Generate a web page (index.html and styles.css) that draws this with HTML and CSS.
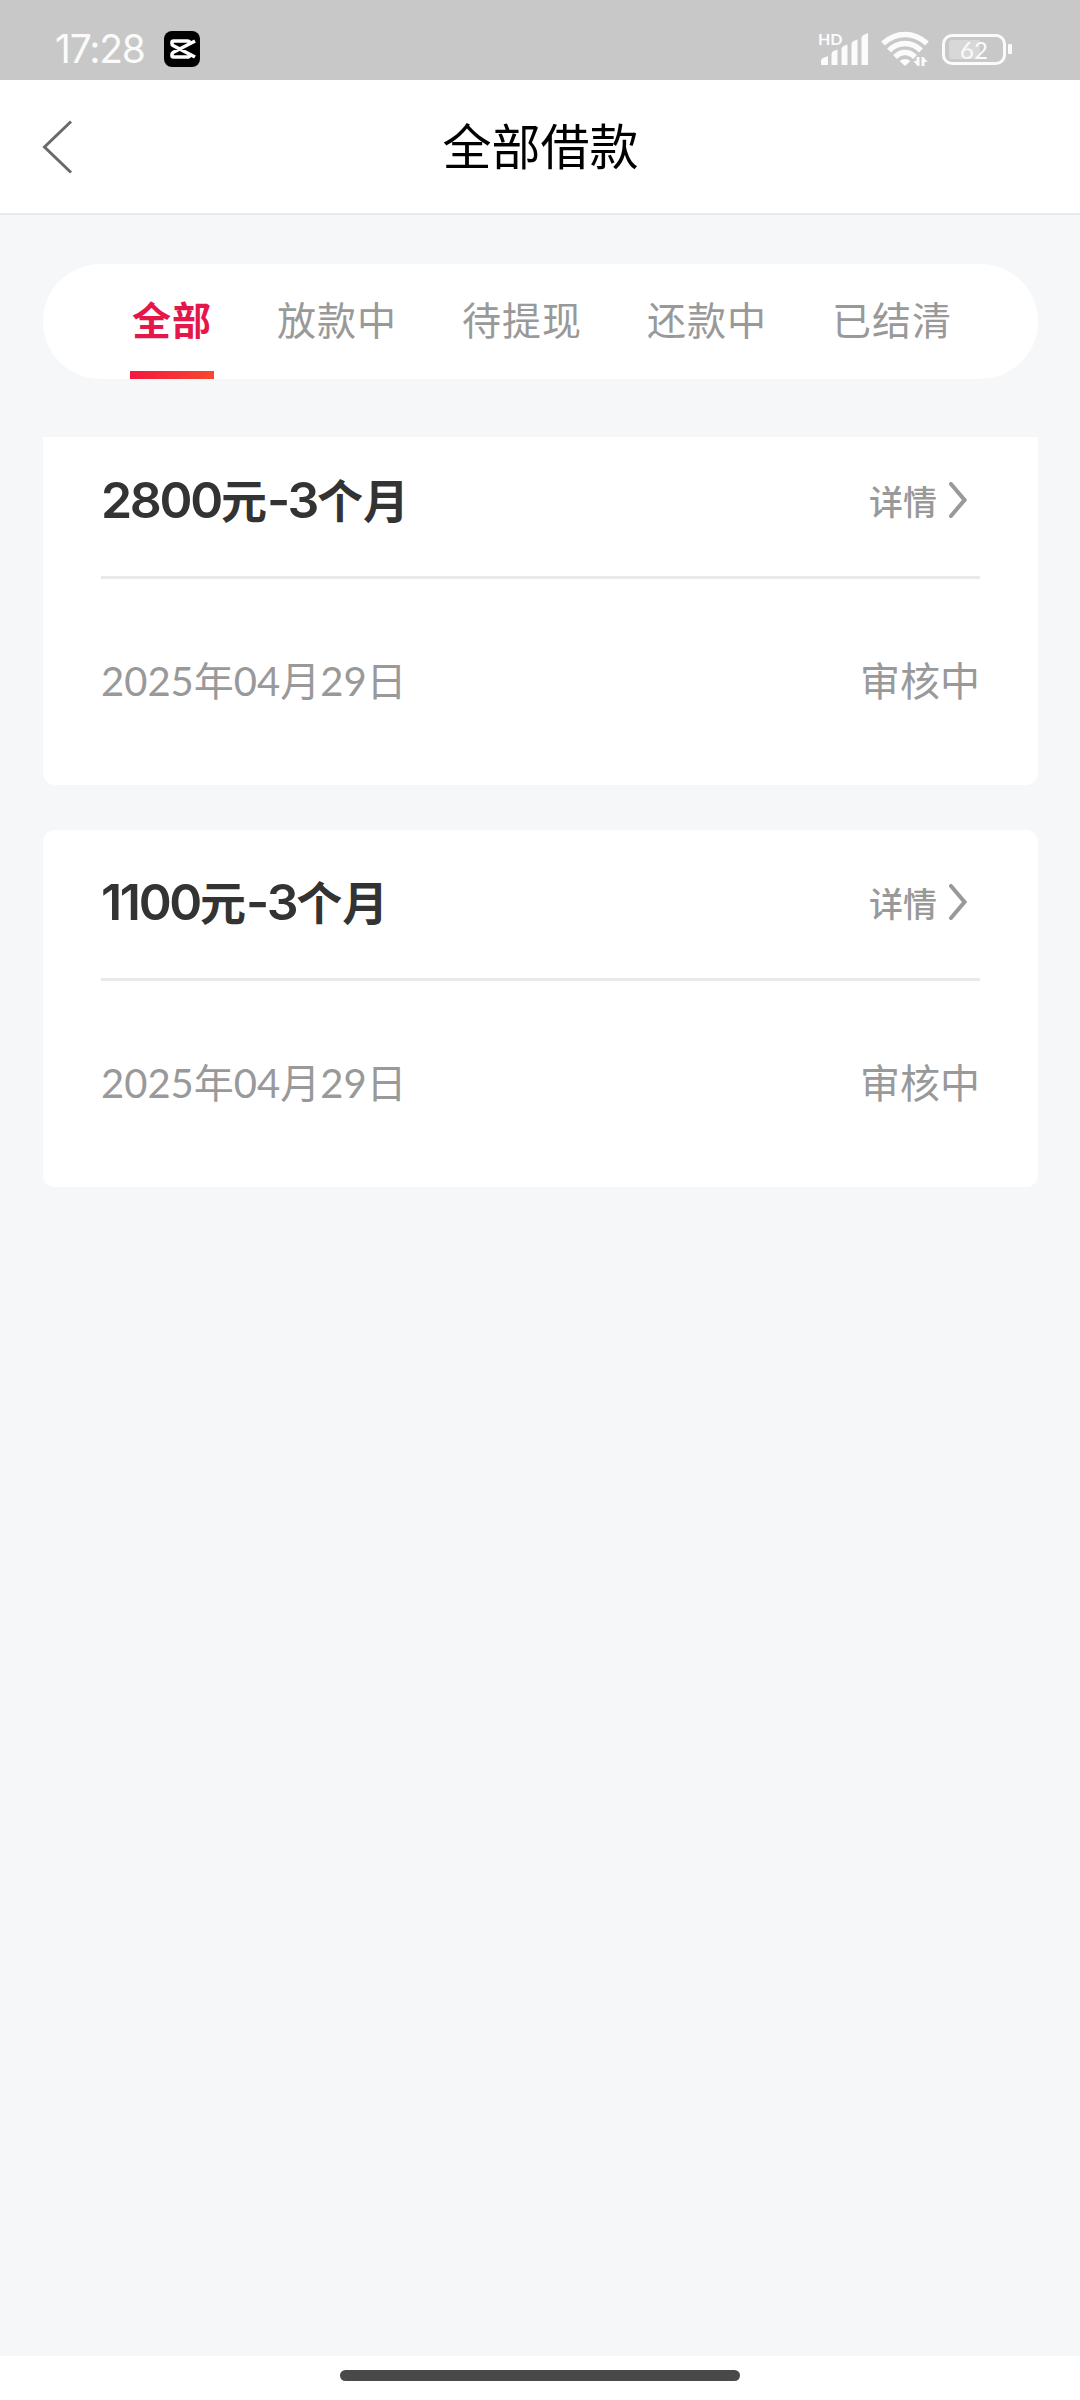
FILE: index.html
```html
<!DOCTYPE html>
<html lang="zh-CN">
<head>
    <meta charset="UTF-8">
    <meta name="viewport" content="width=device-width, initial-scale=1.0">
    <title>全部借款</title>
    <link rel="stylesheet" href="styles.css">
</head>
<body>
    <div class="status">
        <span class="time">17:28</span>
        <svg class="app" width="36" height="36" viewBox="0 0 36 36">
            <rect width="36" height="36" rx="8" fill="#000"/>
            <path d="M31 10L9 21.500Q8 22 8 23.500v1q0 1.500 1.500 1.500H23q2.500 0 3-2M31 26L9 14.500Q8 14 8 12.500v-1Q8 10 9.500 10H23q2.500 0 3 2" fill="none" stroke="#fff" stroke-width="3.600"/>
        </svg>
        <div class="status-right">
            <div class="signal">
                <span class="hd">HD</span>
                <svg width="50" height="34" viewBox="0 0 50 34">
                    <g fill="#fbfbfb">
                        <path d="M2 33v-4q0-2 2-3l5-2v9zM12.500 33V22q0-2 2-3l4-1.500V33zM22.500 33V17q0-2 2-3l4-1.500V33zM32.500 33V12q0-2 2-3l4-1.500V33zM42.500 33V6q0-2 2-3l4.500-2v32z"/>
                    </g>
                </svg>
            </div>
            <svg class="wifi" width="48" height="36" viewBox="0 0 48 36">
                <g fill="none" stroke="#fbfbfb" stroke-width="5.500">
                    <path d="M2 12.500Q12 3.500 24 3.500T46 12.500"/>
                    <path d="M8 19.500Q15 12.500 24 12.500T40 19.500"/>
                    <path d="M14 26Q18.500 21.500 24 21.500T34 26"/>
                </g>
                <path d="M18.500 30Q24 26 29.500 30L24 35z" fill="#fbfbfb"/>
                <path d="M38.500 26v9h-2l-4-5h3v-4zM40.500 35v-9h2l4 5h-3v4z" fill="#fbfbfb"/>
            </svg>
            <div class="battery">
                <div class="battery-body"><span>62</span></div>
                <div class="battery-cap"></div>
            </div>
        </div>
    </div>
    <div class="nav">
        <svg class="back" width="32" height="56" viewBox="0 0 32 56">
            <path d="M29 2.500L2.500 28L29 53.500" fill="none" stroke="#6a6a6a" stroke-width="3"/>
        </svg>
        <div class="nav-title">全部借款</div>
    </div>
    <div class="main">
        <div class="tabs">
            <div class="tab active">全部</div>
            <div class="tab">放款中</div>
            <div class="tab">待提现</div>
            <div class="tab">还款中</div>
            <div class="tab">已结清</div>
        </div>
        <div class="list">
            <div class="card">
                <div class="card-top">
                    <div class="amount"><b>2800</b>元<b>-3</b>个月</div>
                    <div class="detail">详情
                        <svg width="18" height="36" viewBox="0 0 18 36"><path d="M2 2L15.500 18L2 34" fill="none" stroke="#999" stroke-width="4" stroke-linecap="round"/></svg>
                    </div>
                </div>
                <div class="card-bottom">
                    <div class="date">2025年04月29日</div>
                    <div class="state">审核中</div>
                </div>
            </div>
            <div class="card">
                <div class="card-top">
                    <div class="amount"><b>1100</b>元<b>-3</b>个月</div>
                    <div class="detail">详情
                        <svg width="18" height="36" viewBox="0 0 18 36"><path d="M2 2L15.500 18L2 34" fill="none" stroke="#999" stroke-width="4" stroke-linecap="round"/></svg>
                    </div>
                </div>
                <div class="card-bottom">
                    <div class="date">2025年04月29日</div>
                    <div class="state">审核中</div>
                </div>
            </div>
        </div>
    </div>
    <div class="home"><div class="home-bar"></div></div>
</body>
</html>
```
FILE: styles.css
```css
*{
    box-sizing: border-box;
}
body{
    margin: 0;
    height: 2400px;
    display: flex;
    flex-direction: column;
    background: #f6f7f9;
    font-family: Lato, "Noto Sans CJK SC", sans-serif;
    color: #999;
}
svg{
    display: block;
}
/* 状态栏 */
.status{
    height: 80px;
    padding: 18px 68px 0 55px;
    display: flex;
    align-items: center;
    background: #c8c8c8;
    color: #fbfbfb;
}
.time{
    width: 109px;
    font-family: Inter, sans-serif;
    font-size: 39px;
    line-height: 40px;
    letter-spacing: -1.2px;
}
.status-right{
    margin-left: auto;
    display: flex;
    align-items: center;
}
.signal{
    position: relative;
    margin-right: 12px;
}
.hd{
    position: absolute;
    left: -1px;
    top: -1px;
    font-size: 16px;
    line-height: 16px;
    font-weight: bold;
}
.wifi{
    margin-right: 13px;
}
.battery{
    display: flex;
    align-items: center;
}
.battery-body{
    width: 64px;
    height: 31px;
    padding: 3px 4px;
    border: 3px solid #fbfbfb;
    border-radius: 10px;
    font-size: 24px;
    line-height: 20px;
    text-align: center;
    background: linear-gradient(90deg,#d8d8d8 62%,transparent 62%) content-box;
}
.battery-cap{
    width: 4px;
    height: 10px;
    margin-left: 2px;
    border-radius: 1px;
    background: #fbfbfb;
}
/* 标题栏 */
.nav{
    height: 135px;
    padding: 0 42px;
    display: flex;
    align-items: center;
    background: #fff;
    border-bottom: 2px solid #e9e9e9;
}
.nav-title{
    flex: 1;
    padding: 0 31px 1px 0;
    text-align: center;
    font-size: 49px;
    line-height: 60px;
    color: #000;
}
.main{
    flex: 1;
    padding: 49px 42px 0 43px;
}
.tabs{
    height: 115px;
    padding: 0 84px 0 87px;
    display: flex;
    justify-content: space-between;
    border-radius: 58px;
    background: #fff;
}
.tab{
    padding: 0 2px;
    font-size: 39px;
    letter-spacing: 1px;
    line-height: 113px;
}
.active{
    font-weight: bold;
    color: #e5174a;
    background: linear-gradient(90deg,#f4173e,#f8472f) bottom / 100% 8px no-repeat;
}
/* 借款列表 */
.list{
    margin-top: 58px;
    overflow: hidden;
}
.card{
    height: 357px;
    margin-bottom: 45px;
    padding: 0 58px;
    border-radius: 12px;
    background: #fff;
}
.card:first-child{
    margin-top: -9px;
}
.card-top{
    height: 151px;
    display: flex;
    justify-content: space-between;
    align-items: center;
    padding-bottom: 4px;
    border-bottom: 3px solid #e9e9e9;
}
.amount{
    font-size: 46px;
    line-height: 60px;
    font-weight: bold;
    color: #333;
}
.amount b{
    font-family: Inter, sans-serif;
    font-size: 50px;
    font-weight: 600;
    letter-spacing: -2.3px;
}
.detail{
    display: flex;
    align-items: center;
    gap: 12px;
    padding-right: 13px;
    font-size: 34px;
    font-weight: 500;
}
.card-bottom{
    height: 206px;
    padding-bottom: 6px;
    display: flex;
    justify-content: space-between;
    align-items: center;
    font-size: 40px;
}
/* 底部手势条 */
.home{
    height: 44px;
    padding-top: 14px;
    background: #fff;
}
.home-bar{
    width: 400px;
    height: 11px;
    margin: 0 auto;
    border-radius: 6px;
    background: #494949;
}
```
